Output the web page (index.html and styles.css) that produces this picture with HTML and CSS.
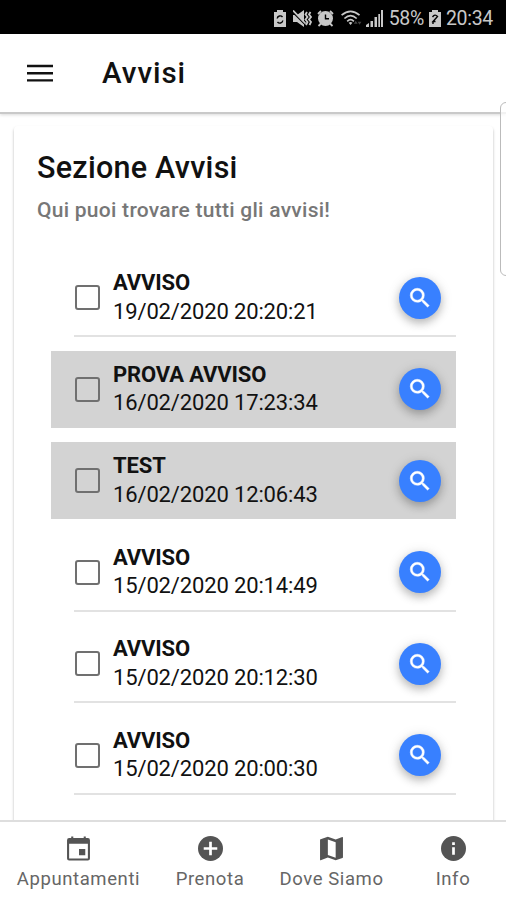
FILE: index.html
```
<!DOCTYPE html>
<html lang="it">
<head>
  <meta charset="UTF-8" />
  <meta name="viewport" content="width=device-width, initial-scale=1.0" />
  <title>Avvisi</title>
  <link rel="stylesheet" href="styles.css">
</head>
<body>
  <svg class="symbols" width="0" height="0">
    <symbol id="search" viewBox="0 0 24 24">
      <path d="M15.5 14h-.79l-.28-.27A6.47 6.47 0 0 0 16 9.5 6.5 6.5 0 1 0 9.5 16c1.61 0 3.09-.59 4.23-1.57l.27.28v.79l5 4.99L20.49 19l-4.99-5zm-6 0C7.01 14 5 11.99 5 9.5S7.01 5 9.5 5 14 7.01 14 9.5 11.99 14 9.5 14z"/>
    </symbol>
  </svg>

  <div class="status-bar">
    <svg class="st-saver" viewBox="0 0 12 17"><path d="M3 0h6v2h3v15H0V2h3z"/><path class="cut" d="M3.2 8.5A3 3 0 0 1 8.5 7M8.8 10.5A3 3 0 0 1 3.5 12"/></svg>
    <svg class="st-mute" viewBox="0 0 19 17"><path d="M0 5h4l7-5v17l-7-5H0z"/><path class="cut" d="M0 2.500l12 12"/><path class="line" d="M0 .500l12.500 13M14 2l-1.500 2.500 2 2.500-2 2.500 2 2.500-1.500 3M17.500 2L16 4.500 18 7l-2 2.500 2 2.500-1.500 3"/></svg>
    <svg class="st-alarm" viewBox="0 0 17 17"><circle cx="8.500" cy="8.500" r="7.500"/><path class="line" d="M1 4l3-3M16 4l-3-3M1.500 16l3-3M15.500 16l-3-3"/><path class="cut" d="M8.500 4.500v4.300h3.500"/></svg>
    <svg class="st-wifi" viewBox="0 0 23 18"><path class="line" d="M1 5.500Q10.500-2.500 20 5.500M4 9Q10.500 3 17 9M7 12Q10.500 8.500 14 12"/><path d="M8.500 13.500q2-1.500 4 0l-2 2.500z"/><path class="dim" d="M16 11.500l-2 3h4zM20 15.500l-2-3h4z"/></svg>
    <svg class="st-signal" viewBox="0 0 17 17"><path d="M0 17v-2l3-2v4zM4.500 17v-6H7v6zM8.500 17V7H11v10zM12.300 17V4h1.700v13zM15 17V0h2v17z"/></svg>
    <span class="percent">58%</span>
    <svg class="st-battery" viewBox="0 0 12 17"><path d="M3 0h6v2h3v15H0V2h3z"/><path class="cut" d="M3.500 7Q6 3.500 8.500 6.500L4 11.500h2.500M4 12v2"/></svg>
    <span class="clock">20:34</span>
  </div>

  <header class="toolbar">
    <svg class="menu" viewBox="0 0 26 18"><path d="M0 2h26M0 9.200h26M0 16.400h26"/></svg>
    <h1>Avvisi</h1>
  </header>

  <main class="content">
    <section class="card">
      <h2>Sezione Avvisi</h2>
      <p class="subtitle">Qui puoi trovare tutti gli avvisi!</p>

      <ul class="list">
        <li class="item">
          <span class="checkbox"></span>
          <div class="label"><b>AVVISO</b><span>19/02/2020 20:20:21</span></div>
          <button class="fab"><svg><use href="#search"/></svg></button>
        </li>
        <li class="item read">
          <span class="checkbox"></span>
          <div class="label"><b>PROVA AVVISO</b><span>16/02/2020 17:23:34</span></div>
          <button class="fab"><svg><use href="#search"/></svg></button>
        </li>
        <li class="item read">
          <span class="checkbox"></span>
          <div class="label"><b>TEST</b><span>16/02/2020 12:06:43</span></div>
          <button class="fab"><svg><use href="#search"/></svg></button>
        </li>
        <li class="item">
          <span class="checkbox"></span>
          <div class="label"><b>AVVISO</b><span>15/02/2020 20:14:49</span></div>
          <button class="fab"><svg><use href="#search"/></svg></button>
        </li>
        <li class="item">
          <span class="checkbox"></span>
          <div class="label"><b>AVVISO</b><span>15/02/2020 20:12:30</span></div>
          <button class="fab"><svg><use href="#search"/></svg></button>
        </li>
        <li class="item">
          <span class="checkbox"></span>
          <div class="label"><b>AVVISO</b><span>15/02/2020 20:00:30</span></div>
          <button class="fab"><svg><use href="#search"/></svg></button>
        </li>
      </ul>
    </section>
  </main>

  <nav class="tabs">
    <a class="tab tab-app">
      <svg viewBox="0 0 24 24"><path d="M3 2h2V.500h2V2h10V.500h2V2h2A2 2 0 0 1 23 4v17.500a2 2 0 0 1-2 2H3a2 2 0 0 1-2-2V4a2 2 0 0 1 2-2zM3 7.500v14h18v-14zM12.500 12.500h6v6h-6z" fill-rule="evenodd"/></svg>
      <span>Appuntamenti</span>
    </a>
    <a class="tab tab-pre">
      <svg viewBox="0 0 24 24"><circle cx="12" cy="12" r="12"/><path class="plus" d="M12 5.500v13M5.500 12h13"/></svg>
      <span>Prenota</span>
    </a>
    <a class="tab tab-map">
      <svg viewBox="0 0 24 24"><path d="M22.400 1L16 3.400 8.500.8 1.500 3Q1 3.200 1 3.700v19q0 .6.600.5l6.900-2.500 7.500 2.600 6.500-2.200q.5-.2.500-.7v-19q0-.5-.600-.400zM16 20.800l-7.500-2.600V3.400L16 6z" fill-rule="evenodd"/></svg>
      <span>Dove Siamo</span>
    </a>
    <a class="tab tab-info">
      <svg viewBox="0 0 24 24"><circle cx="12" cy="12" r="12"/><path class="plus" d="M12 10.800v7.200M12 6v2.600"/></svg>
      <span>Info</span>
    </a>
  </nav>

  <!-- edge panel handle -->
  <div class="edge-handle"></div>
</body>
</html>
```

FILE: styles.css
```
* {
  box-sizing: border-box;
}

body {
  font-family: Roboto, sans-serif;
  margin: 0;
  height: 900px;
  display: flex;
  flex-direction: column;
  overflow: hidden;
  background-color: #fff;
  color: #111;
  position: relative;
}

.symbols {
  position: absolute;
}

.status-bar {
  flex: none;
  height: 34px;
  padding: 3px 13px 0 0;
  background-color: #000;
  color: #c8c8c8;
  display: flex;
  align-items: center;
  justify-content: flex-end;
  font-size: 19.5px;
  letter-spacing: -0.3px;
}

.status-bar svg {
  fill: #c8c8c8;
  flex: none;
  height: 17px;
}

.status-bar .line {
  fill: none;
  stroke: #c8c8c8;
  stroke-width: 1.8;
}

.status-bar .cut {
  fill: none;
  stroke: #000;
  stroke-width: 1.4;
}

.status-bar .dim {
  fill: #444;
}

.st-saver { width: 12px; margin-right: 7px; }
.st-mute { width: 19px; margin-right: 5px; }
.st-alarm { width: 17px; margin-right: 6px; }
.st-wifi { width: 23px; margin-right: 3px; }
.st-signal { width: 17px; margin-right: 6px; }
.st-battery { width: 12px; margin: 0 5px; }

.toolbar {
  flex: none;
  height: 80px;
  padding-left: 27px;
  display: flex;
  align-items: center;
  border-bottom: 2px solid #c9c9c9;
  box-shadow: 0 1px 3px rgba(0, 0, 0, 0.15);
}

.menu {
  width: 26px;
  height: 18px;
  stroke: #111;
  stroke-width: 2.4;
}

h1 {
  margin: 0 0 0 49px;
  font-size: 29.5px;
  font-weight: 500;
  letter-spacing: 0.95px;
}

.content {
  flex: 1;
  min-height: 0;
  overflow: hidden;
  padding: 12px 13px 0 14px;
}

.card {
  height: 760px;
  padding: 23px 37px 0 23px;
  border-radius: 4px;
  box-shadow: 0 2px 3px rgba(0, 0, 0, 0.28);
}

h2 {
  margin: 0;
  font-size: 30.5px;
  line-height: 37px;
  font-weight: 500;
  letter-spacing: 0.25px;
}

.subtitle {
  margin: 11px 0 0;
  font-size: 21px;
  line-height: 26px;
  font-weight: 500;
  letter-spacing: 0.27px;
  color: #777;
}

.list {
  list-style: none;
  margin: 36px 0 0 14px;
  padding: 0;
  display: flex;
  flex-direction: column;
  gap: 14.5px;
}

.item {
  height: 77px;
  padding: 0 15.500px 0 24px;
  display: flex;
  align-items: center;
  border-bottom: 0 solid #e5e5e5;
  box-shadow: none;
  background: linear-gradient(#e2e2e2, #e2e2e2) 23px 100% / 100% 2px no-repeat;
}

/* the divider sits a touch below the row */
.item:not(.read) {
  height: 78px;
  margin-bottom: -1px;
  padding-bottom: 1px;
}

.item.read {
  background: #d3d3d3;
}

.checkbox {
  width: 25px;
  height: 25px;
  border: 2px solid #707070;
  border-radius: 3px;
}

.label {
  flex: 1;
  margin-left: 13px;
  display: flex;
  flex-direction: column;
  font-size: 22px;
  line-height: 28.5px;
  letter-spacing: -0.14px;
}

.fab {
  width: 42px;
  height: 42px;
  padding: 0;
  border: none;
  border-radius: 50%;
  background-color: #3880ff;
  display: flex;
  align-items: center;
  justify-content: center;
  box-shadow: 0 4px 8px rgba(0, 0, 0, 0.22), 0 2px 14px rgba(0, 0, 0, 0.12);
}

.fab svg {
  width: 26px;
  height: 26px;
  fill: #fff;
  stroke: #fff;
  stroke-width: 0.4;
}

.tabs {
  flex: none;
  height: 80px;
  border-top: 2px solid #dedede;
  background-color: #fff;
  display: flex;
  z-index: 1;
}

.tab {
  display: flex;
  flex-direction: column;
  align-items: center;
  padding-top: 14px;
  font-size: 18.5px;
  line-height: 22px;
  letter-spacing: 0.6px;
  color: #666;
}

.tab-app { width: 157px; }
.tab-pre { width: 106px; }
.tab-map { width: 137px; }
.tab-info { width: 106px; }

.tab svg {
  width: 25px;
  height: 25px;
  margin-bottom: 7px;
  fill: #545454;
}

.tab .plus {
  stroke: #fff;
  stroke-width: 2.6;
}

.edge-handle {
  position: absolute;
  top: 102px;
  right: -6px;
  width: 12px;
  height: 174px;
  border: 1px solid #bbb;
  border-radius: 6px;
  background-color: rgba(255, 255, 255, 0.75);
}
```
